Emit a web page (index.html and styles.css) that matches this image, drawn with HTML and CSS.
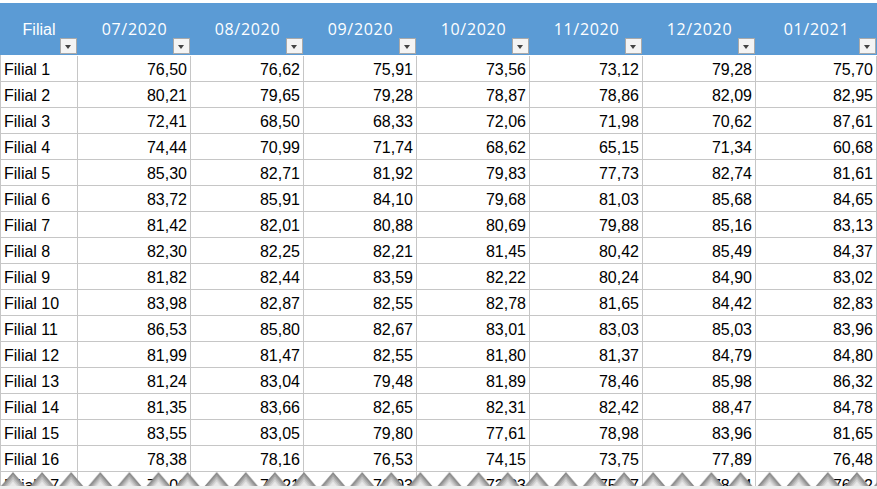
FILE: index.html
```html
<!DOCTYPE html>
<html lang="pt">
<head>
<meta charset="utf-8">
<link rel="stylesheet" href="styles.css">
</head>
<body>
<div class="sheet">
  <div class="head">
    <div class="hcell"><span class="htext">Filial</span><span class="filter"></span></div>
    <div class="hcell"><span class="htext">07/2020</span><span class="filter"></span></div>
    <div class="hcell"><span class="htext">08/2020</span><span class="filter"></span></div>
    <div class="hcell"><span class="htext">09/2020</span><span class="filter"></span></div>
    <div class="hcell"><span class="htext">10/2020</span><span class="filter"></span></div>
    <div class="hcell"><span class="htext">11/2020</span><span class="filter"></span></div>
    <div class="hcell"><span class="htext">12/2020</span><span class="filter"></span></div>
    <div class="hcell"><span class="htext">01/2021</span><span class="filter"></span></div>
  </div>
  <div class="grid">
    <div class="c name">Filial 1</div><div class="c">76,50</div><div class="c">76,62</div><div class="c">75,91</div><div class="c">73,56</div><div class="c">73,12</div><div class="c">79,28</div><div class="c">75,70</div>
    <div class="c name">Filial 2</div><div class="c">80,21</div><div class="c">79,65</div><div class="c">79,28</div><div class="c">78,87</div><div class="c">78,86</div><div class="c">82,09</div><div class="c">82,95</div>
    <div class="c name">Filial 3</div><div class="c">72,41</div><div class="c">68,50</div><div class="c">68,33</div><div class="c">72,06</div><div class="c">71,98</div><div class="c">70,62</div><div class="c">87,61</div>
    <div class="c name">Filial 4</div><div class="c">74,44</div><div class="c">70,99</div><div class="c">71,74</div><div class="c">68,62</div><div class="c">65,15</div><div class="c">71,34</div><div class="c">60,68</div>
    <div class="c name">Filial 5</div><div class="c">85,30</div><div class="c">82,71</div><div class="c">81,92</div><div class="c">79,83</div><div class="c">77,73</div><div class="c">82,74</div><div class="c">81,61</div>
    <div class="c name">Filial 6</div><div class="c">83,72</div><div class="c">85,91</div><div class="c">84,10</div><div class="c">79,68</div><div class="c">81,03</div><div class="c">85,68</div><div class="c">84,65</div>
    <div class="c name">Filial 7</div><div class="c">81,42</div><div class="c">82,01</div><div class="c">80,88</div><div class="c">80,69</div><div class="c">79,88</div><div class="c">85,16</div><div class="c">83,13</div>
    <div class="c name">Filial 8</div><div class="c">82,30</div><div class="c">82,25</div><div class="c">82,21</div><div class="c">81,45</div><div class="c">80,42</div><div class="c">85,49</div><div class="c">84,37</div>
    <div class="c name">Filial 9</div><div class="c">81,82</div><div class="c">82,44</div><div class="c">83,59</div><div class="c">82,22</div><div class="c">80,24</div><div class="c">84,90</div><div class="c">83,02</div>
    <div class="c name">Filial 10</div><div class="c">83,98</div><div class="c">82,87</div><div class="c">82,55</div><div class="c">82,78</div><div class="c">81,65</div><div class="c">84,42</div><div class="c">82,83</div>
    <div class="c name">Filial 11</div><div class="c">86,53</div><div class="c">85,80</div><div class="c">82,67</div><div class="c">83,01</div><div class="c">83,03</div><div class="c">85,03</div><div class="c">83,96</div>
    <div class="c name">Filial 12</div><div class="c">81,99</div><div class="c">81,47</div><div class="c">82,55</div><div class="c">81,80</div><div class="c">81,37</div><div class="c">84,79</div><div class="c">84,80</div>
    <div class="c name">Filial 13</div><div class="c">81,24</div><div class="c">83,04</div><div class="c">79,48</div><div class="c">81,89</div><div class="c">78,46</div><div class="c">85,98</div><div class="c">86,32</div>
    <div class="c name">Filial 14</div><div class="c">81,35</div><div class="c">83,66</div><div class="c">82,65</div><div class="c">82,31</div><div class="c">82,42</div><div class="c">88,47</div><div class="c">84,78</div>
    <div class="c name">Filial 15</div><div class="c">83,55</div><div class="c">83,05</div><div class="c">79,80</div><div class="c">77,61</div><div class="c">78,98</div><div class="c">83,96</div><div class="c">81,65</div>
    <div class="c name">Filial 16</div><div class="c">78,38</div><div class="c">78,16</div><div class="c">76,53</div><div class="c">74,15</div><div class="c">73,75</div><div class="c">77,89</div><div class="c">76,48</div>
    <div class="c name">Filial 17</div><div class="c">77,01</div><div class="c">77,21</div><div class="c">76,93</div><div class="c">73,23</div><div class="c">75,17</div><div class="c">78,84</div><div class="c">76,82</div>
  </div>
  <svg class="torn" width="877" height="18" viewBox="0 0 877 18" aria-hidden="true">
    <defs>
      <pattern id="zig" patternUnits="userSpaceOnUse" x="-1.55" y="0" width="29.1" height="18">
        <polygon points="0,18 14.55,1 29.1,18" fill="#8a8a8a"/>
        <polygon points="2.2,18 14.55,3.2 26.9,18" fill="#a2a2a2"/>
        <polygon points="4.2,18 14.55,5.6 24.9,18" fill="#bcbcbc"/>
        <polygon points="6.2,18 14.55,8 22.9,18" fill="#d4d4d4"/>
        <polygon points="8.2,18 14.55,10.5 20.9,18" fill="#e8e8e8"/>
        <rect x="0" y="15" width="29.1" height="3" fill="#eeeeee"/>
      </pattern>
    </defs>
    <rect x="0" y="0" width="877" height="18" fill="url(#zig)"/>
  </svg>
</div>
</body>
</html>
```

FILE: styles.css
```css
html, body {
  margin: 0;
  padding: 0;
  background: #ffffff;
}

body {
  width: 877px;
  height: 489px;
  overflow: hidden;
}

.sheet {
  position: relative;
  padding-top: 3px;
  height: 486px;
  overflow: hidden;
}

.head {
  display: grid;
  grid-template-columns: 78px repeat(6, 113px) 1fr;
  height: 52px;
  background: #5b9bd5;
}

.hcell {
  position: relative;
  display: flex;
  align-items: center;
  justify-content: center;
}

.htext {
  font-family: "Liberation Sans", Arial, sans-serif;
  font-size: 16px;
  color: #ffffff;
  margin-top: 1px;
}

.hcell:not(:first-child) .htext {
  font-family: "Open Sans", sans-serif;
  font-size: 16px;
  letter-spacing: 0.7px;
  margin-top: 0;
}

.filter {
  position: absolute;
  right: 1px;
  bottom: 1px;
  width: 15px;
  height: 14px;
  border: 1px solid #a9a9a9;
  background: #f4f4f4;
}

.filter::after {
  content: "";
  position: absolute;
  left: 4px;
  top: 6px;
  border-left: 3.5px solid transparent;
  border-right: 3.5px solid transparent;
  border-top: 4px solid #444444;
}

.grid {
  display: grid;
  grid-template-columns: 77px repeat(6, 113px) 1fr;
  grid-auto-rows: 26px;
  border-left: 1px solid #c6c6c6;
  padding-top: 1px;
}

.c {
  border-right: 1px solid #c6c6c6;
  border-bottom: 1px solid #c6c6c6;
  font-family: "Liberation Sans", Arial, sans-serif;
  font-size: 16px;
  line-height: 18px;
  color: #000000;
  display: flex;
  align-items: flex-end;
  justify-content: flex-end;
  padding: 0 3px 2px 0;
}

.c.name {
  justify-content: flex-start;
  padding-left: 3px;
}

.torn {
  position: absolute;
  left: 0;
  top: 471px;
  display: block;
}
```
